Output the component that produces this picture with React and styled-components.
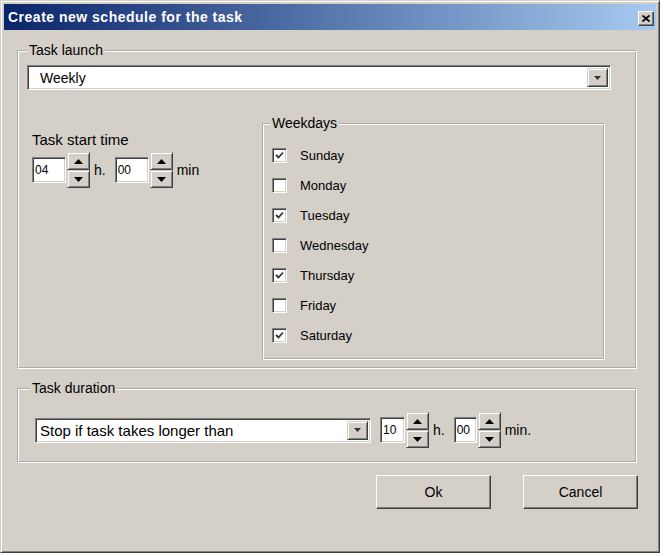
import React, { useState } from "react";
import styled, { createGlobalStyle } from "styled-components";

const FACE = "#d4d0c8";
const SHADOW = "#808080";
const DARK = "#404040";
const HILITE = "#ffffff";

const GlobalStyle = createGlobalStyle`
  * { box-sizing: border-box; }
  html, body { margin: 0; padding: 0; background: #fff; }
  body {
    font-family: "Liberation Sans", Arial, sans-serif;
    font-size: 13px;
    color: #000;
  }
`;

const weekdays = [
  { name: "Sunday", checked: true },
  { name: "Monday", checked: false },
  { name: "Tuesday", checked: true },
  { name: "Wednesday", checked: false },
  { name: "Thursday", checked: true },
  { name: "Friday", checked: false },
  { name: "Saturday", checked: true },
];

const UpArrow = () => (
  <svg width="9" height="5" viewBox="0 0 9 5">
    <polygon points="0,5 4.5,0 9,5" fill="#000" />
  </svg>
);

const DownArrow = () => (
  <svg width="9" height="5" viewBox="0 0 9 5">
    <polygon points="0,0 9,0 4.5,5" fill="#000" />
  </svg>
);

const SpinField = ({ value, width }) => (
  <SpinWrap>
    <Edit $width={width}>{value}</Edit>
    <SpinButtons>
      <SpinButton>
        <UpArrow />
      </SpinButton>
      <SpinButton>
        <DownArrow />
      </SpinButton>
    </SpinButtons>
  </SpinWrap>
);

const Combo = ({ text, indent, size }) => (
  <ComboBox>
    <ComboText $indent={indent} $size={size}>
      {text}
    </ComboText>
    <DropButton>
      <svg width="7" height="4" viewBox="0 0 7 4">
        <polygon points="0,0 7,0 3.5,4" fill="#333" />
      </svg>
    </DropButton>
  </ComboBox>
);

const App = () => {
  const [days, setDays] = useState(weekdays);

  const toggleDay = (name) => {
    setDays((prev) =>
      prev.map((d) => (d.name === name ? { ...d, checked: !d.checked } : d))
    );
  };

  return (
    <>
      <GlobalStyle />
      <Window>
        <TitleBar>
          <span>Create new schedule for the task</span>
          <CloseButton>
            <svg width="8" height="7" viewBox="0 0 8 7">
              <path d="M0.5 0.5 L7.5 6.5 M7.5 0.5 L0.5 6.5" stroke="#000" strokeWidth="1.8" />
            </svg>
          </CloseButton>
        </TitleBar>
        <Body>
          <LaunchGroup>
            <Legend $offset={0}>Task launch</Legend>
            <LaunchCombo>
              <Combo text="Weekly" indent={13} size={14} />
            </LaunchCombo>
            <LaunchRow>
              <StartColumn>
                <FieldLabel>Task start time</FieldLabel>
                <TimeRow>
                  <SpinField value="04" width={34} />
                  <Unit>h.</Unit>
                  <SpinField value="00" width={34} />
                  <Unit>min</Unit>
                </TimeRow>
              </StartColumn>
              <WeekdaysGroup>
                <Legend $offset={-2}>Weekdays</Legend>
                {days.map((d) => (
                  <DayRow key={d.name} onClick={() => toggleDay(d.name)}>
                    <CheckBox>
                      {d.checked && (
                        <svg width="9" height="9" viewBox="0 0 9 9">
                          <polyline
                            points="1,4 3.5,6.5 8,1.5"
                            fill="none"
                            stroke="#333"
                            strokeWidth="1.8"
                          />
                        </svg>
                      )}
                    </CheckBox>
                    <span>{d.name}</span>
                  </DayRow>
                ))}
              </WeekdaysGroup>
            </LaunchRow>
          </LaunchGroup>

          <DurationGroup>
            <Legend $offset={-5}>Task duration</Legend>
            <TimeRow>
              <DurationCombo>
                <Combo text="Stop if task takes longer than" indent={5} size={15} />
              </DurationCombo>
              <SpinField value="10" width={25} />
              <Unit>h.</Unit>
              <SpinField value="00" width={23} />
              <Unit>min.</Unit>
            </TimeRow>
          </DurationGroup>

          <ButtonRow>
            <PushButton>Ok</PushButton>
            <PushButton>Cancel</PushButton>
          </ButtonRow>
        </Body>
      </Window>
    </>
  );
};

const Window = styled.div`
  width: 660px;
  height: 553px;
  background: ${FACE};
  border: 1px solid;
  border-color: ${FACE} ${DARK} ${DARK} ${FACE};
  box-shadow: inset 1px 1px 0 ${HILITE}, inset -1px -1px 0 ${SHADOW};
  padding: 3px;
  display: flex;
  flex-direction: column;
`;

const TitleBar = styled.div`
  height: 26px;
  display: flex;
  align-items: center;
  justify-content: space-between;
  padding: 0 2px 0 4px;
  background: linear-gradient(to right, #0a246a, #a6caf0);
  color: #fff;
  font-weight: bold;
  font-size: 14px;
  letter-spacing: 0.5px;
`;

const CloseButton = styled.div`
  width: 16px;
  height: 15px;
  margin-top: 3px;
  display: flex;
  align-items: center;
  justify-content: center;
  background: ${FACE};
  border: 1px solid;
  border-color: ${HILITE} ${DARK} ${DARK} ${HILITE};
  box-shadow: inset -1px -1px 0 ${SHADOW};
`;

const Body = styled.div`
  padding: 13px 19px 0 13px;
  display: flex;
  flex-direction: column;
`;

const Group = styled.fieldset`
  margin: 0;
  min-width: 0;
  border: 2px groove #fff;
`;

const Legend = styled.legend`
  padding: 0 2px;
  margin-left: ${(props) => props.$offset}px;
  line-height: 15px;
  font-size: 14px;
`;

const LaunchGroup = styled(Group)`
  padding: 7px 0 7px 8px;
`;

const LaunchCombo = styled.div`
  width: 584px;
`;

const LaunchRow = styled.div`
  display: flex;
  margin-top: 26px;
`;

const StartColumn = styled.div`
  width: 235px;
  padding: 16px 0 0 5px;
  display: flex;
  flex-direction: column;
  gap: 4px;
`;

const FieldLabel = styled.div`
  line-height: 16px;
  font-size: 15px;
`;

const TimeRow = styled.div`
  display: flex;
  align-items: center;
  height: 36px;
`;

const SpinWrap = styled.div`
  display: flex;
  align-items: center;
  gap: 1px;
`;

const Edit = styled.div`
  width: ${(props) => props.$width}px;
  height: 26px;
  padding: 0 2px;
  display: flex;
  align-items: center;
  font-size: 12px;
  background: #fff;
  border: 1px solid;
  border-color: ${SHADOW} ${HILITE} ${HILITE} ${SHADOW};
  box-shadow: inset 1px 1px 0 ${DARK}, inset -1px -1px 0 ${FACE};
`;

const SpinButtons = styled.div`
  display: flex;
  flex-direction: column;
  width: 23px;
  height: 36px;
`;

const SpinButton = styled.div`
  flex: 1;
  display: flex;
  align-items: center;
  justify-content: center;
  background: ${FACE};
  border: 1px solid;
  border-color: ${FACE} ${DARK} ${DARK} ${FACE};
  box-shadow: inset 1px 1px 0 ${HILITE}, inset -1px -1px 0 ${SHADOW};
`;

const Unit = styled.span`
  font-size: 14px;
  padding: 0 9px 0 4px;
  &:last-child {
    padding-right: 0;
  }
`;

const WeekdaysGroup = styled(Group)`
  width: 343px;
  padding: 9px 0 8px 8px;
`;

const DayRow = styled.div`
  height: 30px;
  display: flex;
  align-items: center;
  gap: 13px;
  cursor: default;
`;

const CheckBox = styled.div`
  width: 15px;
  height: 15px;
  display: flex;
  align-items: center;
  justify-content: center;
  background: #fff;
  border: 1px solid;
  border-color: ${SHADOW} ${HILITE} ${HILITE} ${SHADOW};
  box-shadow: inset 1px 1px 0 ${DARK}, inset -1px -1px 0 ${FACE};
`;

const DurationGroup = styled(Group)`
  margin-top: 12px;
  padding: 16px 0 13px 16px;
`;

const DurationCombo = styled.div`
  width: 336px;
  margin-right: 9px;
`;

const ComboBox = styled.div`
  height: 25px;
  display: flex;
  align-items: center;
  padding: 2px;
  background: #fff;
  border: 1px solid;
  border-color: ${SHADOW} ${HILITE} ${HILITE} ${SHADOW};
  box-shadow: inset 1px 1px 0 ${DARK}, inset -1px -1px 0 ${FACE};
`;

const ComboText = styled.div`
  flex: 1;
  font-size: ${(props) => props.$size}px;
  padding-left: ${(props) => props.$indent - 3}px;
`;

const DropButton = styled.div`
  width: 21px;
  height: 100%;
  display: flex;
  align-items: center;
  justify-content: center;
  background: ${FACE};
  border: 1px solid;
  border-color: ${FACE} ${DARK} ${DARK} ${FACE};
  box-shadow: inset 1px 1px 0 ${HILITE}, inset -1px -1px 0 ${SHADOW};
`;

const ButtonRow = styled.div`
  display: flex;
  justify-content: flex-end;
  gap: 32px;
  margin: 12px -1px 0 0;
`;

const PushButton = styled.button`
  width: 115px;
  height: 34px;
  font-family: "Liberation Sans", Arial, sans-serif;
  font-size: 14px;
  color: #000;
  background: ${FACE};
  border: 1px solid;
  border-color: ${HILITE} ${DARK} ${DARK} ${HILITE};
  box-shadow: inset -1px -1px 0 ${SHADOW};
  padding: 0;
  cursor: pointer;
`;

export default App;
